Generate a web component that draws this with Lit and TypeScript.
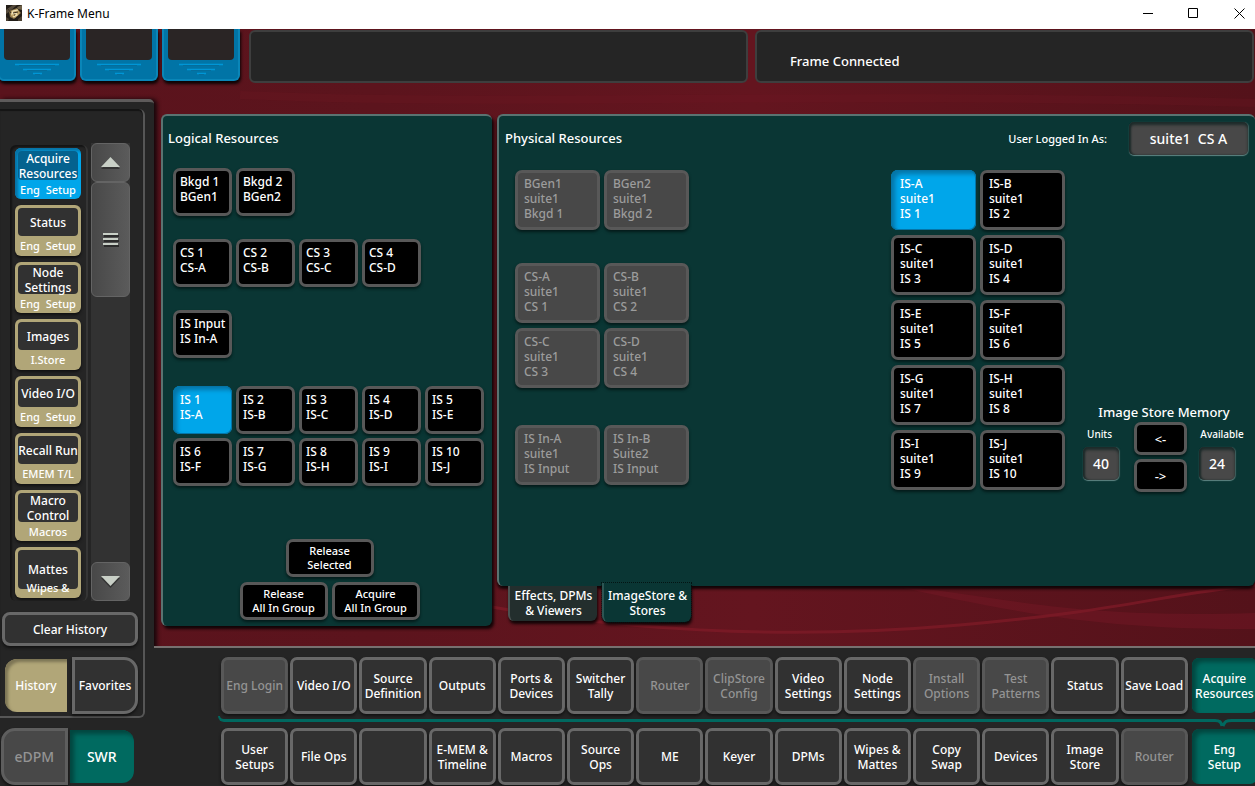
import { LitElement, html, css, svg } from "lit";
import { customElement, property, state } from "lit/decorators.js";
import { classMap } from "lit/directives/class-map.js";

type NavItem = { label: string; off?: boolean };

const HISTORY: { name: string; menu: string; tall?: boolean }[] = [
  { name: "Acquire\nResources", menu: "Eng  Setup" },
  { name: "Status", menu: "Eng  Setup" },
  { name: "Node\nSettings", menu: "Eng  Setup" },
  { name: "Images", menu: "I.Store" },
  { name: "Video I/O", menu: "Eng  Setup" },
  { name: "Recall Run", menu: "EMEM T/L" },
  { name: "Macro\nControl", menu: "Macros" },
  { name: "Mattes", menu: "Wipes &", tall: true },
];

const LOGICAL: string[][] = [
  ["Bkgd 1\nBGen1", "Bkgd 2\nBGen2"],
  ["CS 1\nCS-A", "CS 2\nCS-B", "CS 3\nCS-C", "CS 4\nCS-D"],
  ["IS Input\nIS In-A"],
  [
    "IS 1\nIS-A", "IS 2\nIS-B", "IS 3\nIS-C", "IS 4\nIS-D", "IS 5\nIS-E",
    "IS 6\nIS-F", "IS 7\nIS-G", "IS 8\nIS-H", "IS 9\nIS-I", "IS 10\nIS-J",
  ],
];

const SHARED: string[][] = [
  ["BGen1\nsuite1\nBkgd 1", "BGen2\nsuite1\nBkgd 2"],
  ["CS-A\nsuite1\nCS 1", "CS-B\nsuite1\nCS 2", "CS-C\nsuite1\nCS 3", "CS-D\nsuite1\nCS 4"],
  ["IS In-A\nsuite1\nIS Input", "IS In-B\nSuite2\nIS Input"],
];

const STORES = "ABCDEFGHIJ".split("").map((c, i) => `IS-${c}\nsuite1\nIS ${i + 1}`);

const SUB_MENU: NavItem[] = [
  { label: "Eng Login", off: true },
  { label: "Video I/O" },
  { label: "Source\nDefinition" },
  { label: "Outputs" },
  { label: "Ports &\nDevices" },
  { label: "Switcher\nTally" },
  { label: "Router", off: true },
  { label: "ClipStore\nConfig", off: true },
  { label: "Video\nSettings" },
  { label: "Node\nSettings" },
  { label: "Install\nOptions", off: true },
  { label: "Test\nPatterns", off: true },
  { label: "Status" },
  { label: "Save Load" },
  { label: "Acquire\nResources" },
];

const MAIN_MENU: NavItem[] = [
  { label: "User\nSetups" },
  { label: "File Ops" },
  { label: "" },
  { label: "E-MEM &\nTimeline" },
  { label: "Macros" },
  { label: "Source\nOps" },
  { label: "ME" },
  { label: "Keyer" },
  { label: "DPMs" },
  { label: "Wipes &\nMattes" },
  { label: "Copy\nSwap" },
  { label: "Devices" },
  { label: "Image\nStore" },
  { label: "Router", off: true },
  { label: "Eng\nSetup" },
];

const base = css`
  * {
    box-sizing: border-box;
  }
  button {
    margin: 0;
    padding: 0;
    font: inherit;
    color: inherit;
    white-space: pre;
    overflow: hidden;
    border: 0;
    background: none;
  }
`;

@customElement("title-bar")
export class TitleBar extends LitElement {
  static styles = [
    base,
    css`
      :host {
        display: flex;
        align-items: center;
        height: 29px;
        padding-left: 6px;
        background: #fff;
        color: #000;
        font-size: 12px;
      }
      .name {
        flex: 1;
        margin: 0 0 2px 5px;
      }
      .icon {
        margin-bottom: 3px;
      }
      button {
        display: grid;
        place-items: center;
        width: 45px;
        height: 26px;
        margin-bottom: 3px;
      }
      .close {
        width: 46px;
      }
      .controls {
        display: flex;
        margin-right: -7px;
      }
    `,
  ];

  render() {
    return html`
      <svg class="icon" width="16" height="16" viewBox="0 0 16 16" aria-hidden="true">
        <rect width="16" height="16" fill="#221d17" />
        <path d="M0 5 4 2 7 0H11L3 7 0 9z" fill="#54493a" />
        <path d="M11 2 16 0V5L12 4z" fill="#6d6048" />
        <path d="M0 12 3 14 2 16H0zM12 14l4-3v5h-4z" fill="#4a4032" />
        <path d="M3 6 11 3 15 8 8 14 4 12z" fill="#8a7448" />
        <path d="M5 6 11 4 14 8 9 13 5 11z" fill="#c0a468" />
        <path d="M12 5 7 6 6 9 10 8 11 10 7 12" fill="none" stroke="#f1e3b8" stroke-width="1.2" />
        <path d="M2 4 5 8M7 8 12 7M8 10 9 10" stroke="#3a2f20" stroke-width="1" />
      </svg>
      <span class="name">K-Frame Menu</span>
      <div class="controls">
        <button aria-label="Minimize">
          <svg width="11" height="11"><path d="M0 5.5H10" stroke="#000" /></svg>
        </button>
        <button aria-label="Maximize">
          <svg width="11" height="11"><path d="M.5.5H9.5V9.5H.5z" fill="none" stroke="#000" /></svg>
        </button>
        <button class="close" aria-label="Close">
          <svg width="11" height="11"><path d="M.5.5 10.5 10.5M10.5.5.5 10.5" stroke="#000" /></svg>
        </button>
      </div>
    `;
  }
}

@customElement("status-header")
export class StatusHeader extends LitElement {
  static styles = [
    base,
    css`
      :host {
        display: flex;
        height: 70px;
        padding: 0 1px 16px 0;
        gap: 7px;
      }
      .tiles {
        display: flex;
        gap: 4px;
        width: 242px;
        margin: 0 2px 0 -2px;
        padding-bottom: 2px;
      }
      .tile {
        flex: 1;
        display: flex;
        flex-direction: column;
        padding: 0 4px;
        background: #0174a6;
        border: solid #0a86b8;
        border-width: 0 2px 2px;
        border-radius: 0 0 6px 6px;
        box-shadow: 1px 3px 3px #0c0405;
      }
      .screen {
        height: 31px;
        background: #2a2525;
        border-radius: 0 0 4px 4px;
      }
      .grip {
        align-self: center;
        margin-top: 2px;
      }
      .panel {
        flex: 1;
        display: flex;
        align-items: center;
        margin-top: 1px;
        padding: 9px 0 0 33px;
        background: #252525;
        border: 2px solid #3e3e3e;
        border-radius: 6px;
        font-size: 13px;
      }
    `,
  ];

  render() {
    return html`
      <div class="tiles">
        ${[0, 1, 2].map(
          () => html`<div class="tile">
            <div class="screen"></div>
            <svg class="grip" width="44" height="14" viewBox="0 0 44 14" aria-hidden="true">
              <path d="M0 2.5H44M8 7.5H36M18 11.5H27" stroke="#0096d6" stroke-width="1.5" />
              <path d="M4 3.5H40M12 8.5H32M20 12.5H25" stroke="#0b5f88" opacity=".5" />
            </svg>
          </div>`
        )}
      </div>
      <div class="panel"></div>
      <div class="panel">Frame Connected</div>
    `;
  }
}

@customElement("history-bar")
export class HistoryBar extends LitElement {
  @state() private current = 0;

  static styles = [
    base,
    css`
      :host {
        display: flex;
        flex-direction: column;
        width: 154px;
        background: #252525;
        border-top: 3px solid #5e5b5b;
        border-top-right-radius: 5px;
        box-shadow: 3px 0 4px #16060a;
      }
      .frame {
        flex: 1;
        display: flex;
        flex-direction: column;
        min-height: 0;
        margin: 7px 9px 0 0;
        padding: 36px 5px 2px 2px;
        border: solid #565656;
        border-width: 0 2px 2px 0;
        border-radius: 0 6px 6px 0;
        box-shadow: inset 0 2px 1px #151515;
      }
      .lists {
        flex: 1;
        display: flex;
        gap: 3px;
        min-height: 0;
        padding: 0 8px 0 8px;
      }
      .list {
        display: flex;
        flex-direction: column;
        gap: 6px;
        width: 78px;
        padding: 3px 5px 0 5px;
        overflow: hidden;
        border-right: 2px solid #353535;
        border-radius: 6px;
        box-shadow: inset 2px 2px 2px #141414;
      }
      .item {
        flex: none;
        display: flex;
        flex-direction: column;
        height: 51px;
        padding: 3px;
        line-height: 15px;
        background: #b1a678;
        border-radius: 6px;
        box-shadow: 0 2px 3px #111;
      }
      .name {
        display: grid;
        place-items: center;
        height: 29px;
        margin-bottom: 2px;
        background: #313131;
        border-radius: 4px;
        line-height: 15px;
      }
      .menu {
        font-size: 11px;
        text-align: center;
      }
      .item.on {
        background: #00a6ea;
        box-shadow: inset 3px 3px 3px #0773a5;
      }
      .item.on .name {
        background: #04628f;
      }
      .item.tall .name {
        height: 39px;
        margin-bottom: -9px;
      }
      .track {
        flex: 1;
        display: flex;
        flex-direction: column;
        margin-top: -2px;
        background: #323232;
      }
      .arrow,
      .thumb {
        display: grid;
        place-items: center;
        height: 39px;
        background: linear-gradient(90deg, #484848, #5b5b5b);
        border: 1px solid #646464;
        border-radius: 6px;
      }
      .thumb {
        height: 115px;
      }
      .down {
        margin-top: auto;
      }
      .clear {
        height: 34px;
        margin-top: 11px;
        background: #313131;
        border: 3px solid #686868;
        border-radius: 8px;
        box-shadow: 0 2px 3px #111;
      }
      .pair {
        display: grid;
        grid-template-columns: 1fr 1fr;
        gap: 4px;
        height: 57px;
        margin-top: 11px;
      }
      .tab {
        background: #313131;
        border: 3px solid #686868;
        border-radius: 0 14px 14px 0;
        box-shadow: 0 2px 3px #111;
      }
      .tab.tan {
        margin: 2px 1px 2px 3px;
        background: #b1a678;
        border: 0;
        border-radius: 12px 0 0 12px;
        box-shadow: inset 3px 3px 3px #7d7555;
      }
      .foot {
        flex: none;
        gap: 0;
        width: 133px;
        margin: 10px 0 1px 1px;
        font-size: 14px;
      }
      .tab.off {
        background: #484848;
        border-color: #5e5e5e;
        border-radius: 14px 0 0 14px;
        color: #949494;
      }
      .tab.teal {
        margin: 2px 0 2px 2px;
        background: #006a60;
        border: 0;
        border-radius: 0 12px 12px 0;
        box-shadow: inset 4px 4px 4px #02463f;
      }
    `,
  ];

  render() {
    return html`
      <div class="frame">
        <div class="lists">
          <div class="list">
            ${HISTORY.map(
              (h, i) => html`<button
                class=${classMap({ item: true, on: i === this.current, tall: !!h.tall })}
                @click=${() => (this.current = i)}
              ><span class="name">${h.name}</span><span class="menu">${h.menu}</span></button>`
            )}
          </div>
          <div class="track">
            <button class="arrow" aria-label="Scroll up">
              <svg width="21" height="14">
                <path d="M1 13 10.5 4 20 13z" fill="#333" />
                <path d="M1 11 10.5 1 20 11z" fill="#c8cfc6" />
              </svg>
            </button>
            <button class="thumb" aria-label="Scroll position">
              <svg width="16" height="16">
                <path d="M1 4H16M1 9H16M1 14H16" stroke="#2c2c2c" stroke-width="2" />
                <path d="M0 2H15M0 7H15M0 12H15" stroke="#c8cfc6" stroke-width="2" />
              </svg>
            </button>
            <button class="arrow down" aria-label="Scroll down">
              <svg width="21" height="14">
                <path d="M1 3H20L10.5 13z" fill="#333" />
                <path d="M1 1H20L10.5 11z" fill="#c8cfc6" />
              </svg>
            </button>
          </div>
        </div>
        <button class="clear">Clear History</button>
        <div class="pair">
          <button class="tab tan">History</button>
          <button class="tab">Favorites</button>
        </div>
      </div>
      <div class="pair foot">
        <button class="tab off" disabled>eDPM</button>
        <button class="tab teal">SWR</button>
      </div>
    `;
  }
}

const resourceStyles = css`
  .title {
    margin: 0;
    font-size: 13px;
    font-weight: 500;
    line-height: 18px;
  }
  .res {
    display: flex;
    align-items: flex-start;
    padding: 3px 0 0 4px;
    text-align: left;
    line-height: 15px;
    background: #000;
    border: 3px solid #585858;
    border-radius: 7px;
    box-shadow: 0 2px 3px #041a19;
  }
  .res.on {
    padding: 6px 0 0 7px;
    background: #00a6ea;
    border: 0;
    box-shadow: inset 4px 4px 4px #0576a8, inset 0 0 0 1px #0576a8;
  }
`;

@customElement("logical-panel")
export class LogicalPanel extends LitElement {
  @state() private selected = "IS 1\nIS-A";

  static styles = [
    base,
    resourceStyles,
    css`
      :host {
        display: flex;
        flex-direction: column;
        width: 331px;
        padding: 13px 5px 6px;
        background: #0a3634;
        border: solid #5a7371;
        border-width: 2px 0 0 2px;
        border-radius: 6px;
        box-shadow: 2px 3px 3px #120406;
      }
      .groups {
        display: flex;
        flex-direction: column;
        gap: 23px;
        padding: 21px 0 0 5px;
      }
      .group {
        display: grid;
        grid-template-columns: repeat(5, 59px);
        grid-auto-rows: 48px;
        gap: 4px;
      }
      .group:last-child {
        margin-top: 5px;
      }
      .actions {
        display: grid;
        grid-template-columns: 88px 88px;
        grid-auto-rows: 38px;
        justify-content: center;
        gap: 5px 4px;
        margin-top: auto;
        padding-left: 4px;
      }
      .act {
        font-size: 11px;
        line-height: 14px;
        background: #000;
        border: 3px solid #585858;
        border-radius: 7px;
        box-shadow: 0 2px 3px #041a19;
      }
      .wide {
        grid-column: 1 / 3;
        justify-self: center;
        width: 88px;
      }
    `,
  ];

  render() {
    return html`
      <h2 class="title">Logical Resources</h2>
      <div class="groups">
        ${LOGICAL.map(
          (g) => html`<div class="group">
            ${g.map(
              (t) => html`<button
                class=${classMap({ res: true, on: t === this.selected })}
                @click=${() => (this.selected = t)}
              >${t}</button>`
            )}
          </div>`
        )}
      </div>
      <div class="actions">
        <button class="act wide">${"Release\nSelected"}</button>
        <button class="act">${"Release\nAll In Group"}</button>
        <button class="act">${"Acquire\nAll In Group"}</button>
      </div>
    `;
  }
}

@customElement("physical-panel")
export class PhysicalPanel extends LitElement {
  @state() private selected = 0;

  static styles = [
    base,
    resourceStyles,
    css`
      :host {
        display: flex;
        flex-direction: column;
        flex: 1;
        min-width: 0;
      }
      .sheet {
        display: flex;
        flex-direction: column;
        height: 472px;
        padding: 5px 7px 0 6px;
        background: #0a3634;
        border: solid #5a7371;
        border-width: 2px 0 0 2px;
        border-radius: 6px;
        box-shadow: 0 3px 3px #120406;
      }
      .head {
        display: flex;
        align-items: center;
        height: 34px;
      }
      .head .title {
        flex: 1;
      }
      .user {
        margin-right: 22px;
        font-size: 11px;
      }
      .field {
        display: grid;
        place-items: center;
        white-space: pre;
        background: #484848;
        border-radius: 5px;
        font-size: 14px;
        box-shadow: inset 0 3px 3px #1d2b2a, inset 2px 0 2px #1d2b2a, 0 1px 1px #5f8583, 1px 0 1px #3d5c5a;
      }
      .login {
        width: 119px;
        height: 33px;
      }
      .body {
        display: flex;
        padding-top: 15px;
      }
      .shared {
        display: flex;
        flex-direction: column;
        gap: 33px;
        flex: 1;
        padding-left: 10px;
      }
      .shared .cards:last-child {
        margin-top: 4px;
      }
      .cards {
        display: grid;
        grid-template-columns: 85px 85px;
        grid-auto-rows: 60px;
        gap: 5px 4px;
      }
      .cards .res {
        padding-left: 6px;
      }
      .cards .res.on {
        padding-left: 9px;
      }
      .res:disabled {
        background: #484848;
        color: #9c9c9c;
      }
      .memory {
        display: grid;
        grid-template-columns: 39px 53px 46px;
        grid-template-rows: 18px 15px 38px;
        column-gap: 12px;
        align-self: flex-end;
        margin-bottom: 16px;
        width: 183px;
        padding-left: 18px;
      }
      .caption {
        grid-column: 1 / 4;
        justify-self: center;
        font-size: 13px;
      }
      .tag {
        font-size: 10px;
        line-height: 26px;
        justify-self: center;
      }
      .tag.left {
        justify-self: start;
        padding-left: 4px;
      }
      .move {
        grid-column: 2;
        grid-row: 2 / 4;
        display: grid;
        grid-template-rows: 33px 33px;
        gap: 4px;
        padding-top: 1px;
      }
      .move button {
        font-size: 13px;
        background: #000;
        border: 3px solid #585858;
        border-radius: 7px;
        box-shadow: 0 2px 3px #041a19;
      }
      .count {
        width: 36px;
        height: 33px;
        margin-top: 11px;
      }
      .tabs {
        display: flex;
        gap: 5px;
        padding-left: 11px;
      }
      .tab {
        width: 89px;
        height: 35px;
        line-height: 15px;
        padding-bottom: 2px;
        background: #232e2d;
        border-left: 2px solid #4b5352;
        border-radius: 0 0 6px 6px;
        box-shadow: 1px 3px 3px #120406;
      }
      .tab.on {
        position: relative;
        height: 39px;
        margin-top: -3px;
        padding-bottom: 0;
        background: #0a3634;
        border-color: #2d5553;
        outline: 1px dotted #031413;
      }
    `,
  ];

  render() {
    return html`
      <section class="sheet">
        <div class="head">
          <h2 class="title">Physical Resources</h2>
          <label class="user" for="login">User Logged In As:</label>
          <output id="login" class="field login">suite1  CS A</output>
        </div>
        <div class="body">
          <div class="shared">
            ${SHARED.map(
              (g) => html`<div class="cards">
                ${g.map((t) => html`<button class="res" disabled>${t}</button>`)}
              </div>`
            )}
          </div>
          <div class="cards">
            ${STORES.map(
              (t, i) => html`<button
                class=${classMap({ res: true, on: i === this.selected })}
                @click=${() => (this.selected = i)}
              >${t}</button>`
            )}
          </div>
          <div class="memory">
            <span class="caption">Image Store Memory</span>
            <label class="tag left" for="units">Units</label>
            <div class="move">
              <button>&lt;-</button>
              <button>-&gt;</button>
            </div>
            <label class="tag" for="free">Available</label>
            <output id="units" class="field count">40</output>
            <output id="free" class="field count">24</output>
          </div>
        </div>
      </section>
      <div class="tabs">
        <button class="tab">${"Effects, DPMs\n& Viewers"}</button>
        <button class="tab on">${"ImageStore &\nStores"}</button>
      </div>
    `;
  }
}

@customElement("menu-row")
export class MenuRow extends LitElement {
  @property({ attribute: false }) items: NavItem[] = [];
  @state() private active = 14;

  static styles = [
    base,
    css`
      :host {
        display: grid;
        grid-template-columns: repeat(15, minmax(0, 1fr));
        gap: 2px;
        height: 57px;
        margin-right: -2px;
      }
      button {
        line-height: 15px;
        background: #313131;
        border: 3px solid #686868;
        border-radius: 7px;
        box-shadow: 0 2px 3px #111;
      }
      button:disabled {
        background: #484848;
        border-color: #585858;
        color: #949494;
      }
      .on {
        margin: 1px 0 1px 2px;
        background: #006a60;
        border: 0;
        box-shadow: inset 4px 4px 4px #02463f;
      }
    `,
  ];

  render() {
    return this.items.map(
      (it, i) => html`<button
        class=${classMap({ on: i === this.active })}
        ?disabled=${!!it.off}
        aria-label=${it.label || "Unassigned"}
        @click=${() => (this.active = i)}
      >${it.label}</button>`
    );
  }
}

@customElement("app-root")
export class AppRoot extends LitElement {
  static styles = [
    base,
    css`
      :host {
        display: flex;
        flex-direction: column;
        min-height: 100vh;
        overflow: hidden;
        font-family: "Noto Sans", "Open Sans", sans-serif;
        font-size: 12px;
        font-weight: 500;
        color: #fff;
        background: #252525;
      }
      title-bar {
        font-weight: 400;
      }
      .desk {
        flex: 1;
        display: flex;
        flex-direction: column;
        position: relative;
        background: #252525;
      }
      .backdrop {
        position: absolute;
        inset: 0 0 140px 0;
        width: 100%;
        height: calc(100% - 140px);
      }
      status-header,
      history-bar,
      .right {
        position: relative;
      }
      .columns {
        flex: 1;
        display: flex;
      }
      .right {
        flex: 1;
        min-width: 0;
        display: flex;
        flex-direction: column;
      }
      .stage {
        flex: 1;
        display: flex;
        gap: 5px;
        padding: 15px 0 20px 7px;
      }
      .menus {
        display: flex;
        flex-direction: column;
        height: 140px;
        padding: 9px 0 1px 67px;
        background: #252525;
        border-top: 2px solid #777170;
      }
      .link {
        display: flex;
        height: 14px;
        margin-left: -3px;
        padding-top: 2px;
      }
      .rail {
        flex: 1;
        height: 6px;
        border: solid #00685f;
        border-width: 0 0 3px 2px;
        border-radius: 0 0 0 6px;
      }
      .notch {
        width: 40px;
        height: 12px;
      }
    `,
  ];

  render() {
    return html`
      <title-bar></title-bar>
      <div class="desk">
        <svg class="backdrop" viewBox="0 0 1255 617" preserveAspectRatio="none" aria-hidden="true">
          <defs>
            <linearGradient id="red" x1="0" y1="0" x2="1" y2="0">
              <stop offset="0" stop-color="#5a131c" />
              <stop offset=".3" stop-color="#5c141d" />
              <stop offset=".6" stop-color="#64151f" />
              <stop offset="1" stop-color="#54121a" />
            </linearGradient>
          </defs>
          <rect width="1255" height="617" fill="url(#red)" />
          ${svg`
            <path d="M890 556C1000 566 1060 590 1255 584V600C1120 600 1040 590 890 556z" fill="#7a1a27" opacity=".4" />
            <path d="M480 576C640 604 800 610 960 596S1160 566 1255 556" fill="none" stroke="#7d1a27" stroke-width="3" opacity=".8" />
            <path d="M240 66C500 78 800 62 1255 74" fill="none" stroke="#6e1824" stroke-width="8" opacity=".25" />
          `}
        </svg>
        <status-header></status-header>
        <div class="columns">
          <history-bar></history-bar>
          <div class="right">
            <div class="stage">
              <logical-panel></logical-panel>
              <physical-panel></physical-panel>
            </div>
            <div class="menus">
              <menu-row .items=${SUB_MENU}></menu-row>
              <div class="link">
                <div class="rail"></div>
                <svg class="notch" viewBox="0 0 40 12" aria-hidden="true">
                  <path d="M0 4.5C5 4.5 6 6 7 10M40 4.5H17C10 4.5 10 6 8 10" fill="none" stroke="#00685f" stroke-width="3" />
                </svg>
              </div>
              <menu-row .items=${MAIN_MENU}></menu-row>
            </div>
          </div>
        </div>
      </div>
    `;
  }
}
